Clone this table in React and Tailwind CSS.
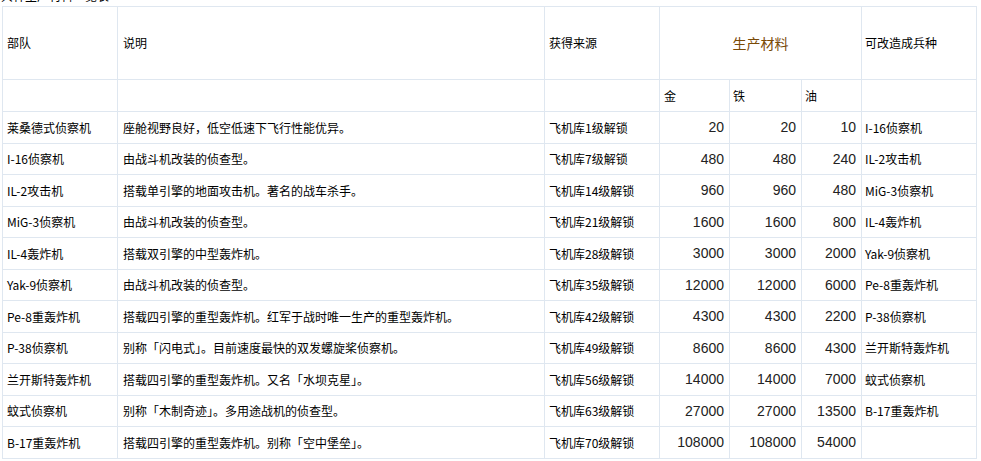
import React from 'react'

const rows = [
  ['莱桑德式侦察机', '座舱视野良好，低空低速下飞行性能优异。', '飞机库1级解锁', '20', '20', '10', 'I-16侦察机'],
  ['I-16侦察机', '由战斗机改装的侦查型。', '飞机库7级解锁', '480', '480', '240', 'IL-2攻击机'],
  ['IL-2攻击机', '搭载单引擎的地面攻击机。著名的战车杀手。', '飞机库14级解锁', '960', '960', '480', 'MiG-3侦察机'],
  ['MiG-3侦察机', '由战斗机改装的侦查型。', '飞机库21级解锁', '1600', '1600', '800', 'IL-4轰炸机'],
  ['IL-4轰炸机', '搭载双引擎的中型轰炸机。', '飞机库28级解锁', '3000', '3000', '2000', 'Yak-9侦察机'],
  ['Yak-9侦察机', '由战斗机改装的侦查型。', '飞机库35级解锁', '12000', '12000', '6000', 'Pe-8重轰炸机'],
  ['Pe-8重轰炸机', '搭载四引擎的重型轰炸机。红军于战时唯一生产的重型轰炸机。', '飞机库42级解锁', '4300', '4300', '2200', 'P-38侦察机'],
  ['P-38侦察机', '别称「闪电式」。目前速度最快的双发螺旋桨侦察机。', '飞机库49级解锁', '8600', '8600', '4300', '兰开斯特轰炸机'],
  ['兰开斯特轰炸机', '搭载四引擎的重型轰炸机。又名「水坝克星」。', '飞机库56级解锁', '14000', '14000', '7000', '蚊式侦察机'],
  ['蚊式侦察机', '别称「木制奇迹」。多用途战机的侦查型。', '飞机库63级解锁', '27000', '27000', '13500', 'B-17重轰炸机'],
  ['B-17重轰炸机', '搭载四引擎的重型轰炸机。别称「空中堡垒」。', '飞机库70级解锁', '108000', '108000', '54000', ''],
]

const cjk = { fontFamily: '"SimSun", "Noto Sans CJK SC", sans-serif' }
const cell = 'border border-[#dfe7f0] px-[4px] align-middle'
const num = 'border border-[#dfe7f0] pr-[5px] text-right align-middle text-[14px] text-[#222] font-["Liberation_Sans",Arial,sans-serif]'

export default function App() {
  return (
    <div className="w-[981px] h-[461px] bg-white overflow-hidden text-[12px] text-black" style={cjk}>
      <div className="h-[6px] overflow-hidden pl-[1px]">
        <div className="mt-[-10px] leading-[12px] text-[12px]">兵种生产材料一览表</div>
      </div>
      <table className="ml-[2px] table-fixed border-collapse w-[974px]">
        <colgroup>
          <col className="w-[115px]" />
          <col className="w-[427px]" />
          <col className="w-[115px]" />
          <col className="w-[70px]" />
          <col className="w-[72px]" />
          <col className="w-[60px]" />
          <col className="w-[115px]" />
        </colgroup>
        <tbody>
          <tr className="h-[73px]">
            <td className={cell}>部队</td>
            <td className={cell + ' pl-[5px]'}>说明</td>
            <td className={cell}>获得来源</td>
            <td colSpan={3} className={cell + ' text-center text-[14px] text-[#7a4a06]'}>生产材料</td>
            <td className={cell + ' pl-[3px]'}>可改造成兵种</td>
          </tr>
          <tr className="h-[32px]">
            <td className={cell}></td>
            <td className={cell}></td>
            <td className={cell}></td>
            <td className={cell}>金</td>
            <td className={cell + ' pl-[3px]'}>铁</td>
            <td className={cell + ' pl-[3px]'}>油</td>
            <td className={cell}></td>
          </tr>
          {rows.map((r, i) => (
            <tr key={i} className={i % 2 === 0 ? 'h-[32px]' : 'h-[31px]'}>
              <td className={cell + ' whitespace-nowrap'}>{r[0]}</td>
              <td className={cell + ' whitespace-nowrap pl-[5px]'}>{r[1]}</td>
              <td className={cell + ' whitespace-nowrap'}>{r[2]}</td>
              <td className={num}>{r[3]}</td>
              <td className={num}>{r[4]}</td>
              <td className={num}>{r[5]}</td>
              <td className={cell + ' whitespace-nowrap pl-[3px]'}>{r[6]}</td>
            </tr>
          ))}
        </tbody>
      </table>
    </div>
  )
}
